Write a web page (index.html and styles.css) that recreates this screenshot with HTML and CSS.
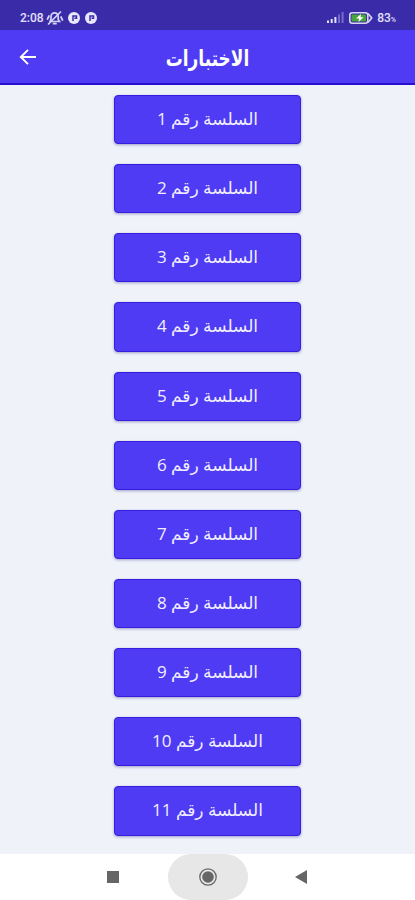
FILE: index.html
```
<!DOCTYPE html>
<html lang="ar">
<head>
    <meta charset="UTF-8">
    <meta name="viewport" content="width=device-width, initial-scale=1.0">
    <title>الاختبارات</title>
    <link rel="stylesheet" href="styles.css">
</head>
<body>

    <div class="status-bar">
        <div class="status-left">
            <span class="time">2:08</span>
            <svg class="mute" viewBox="0 0 18 16" width="18" height="16" fill="none" stroke="#d6d2fa" stroke-width="1.7" stroke-linecap="round">
                <path d="M4 11.5h9.5l-1.3-2V6.5a3.6 3.6 0 0 0-7.2 0v3L4 11.5M7.5 13.7h2.5"/>
                <path d="M2.5 14L14.5 2M1.5 9l1.5-3M15 7l1.500 3"/>
            </svg>
            <svg class="app" viewBox="0 0 12 12" width="12" height="12">
                <circle cx="6" cy="6" r="6" fill="#e9e6ff"/>
                <path d="M5 9V4h3.5v2.2H6.5" fill="none" stroke="#3a2ca9" stroke-width="1.5"/>
            </svg>
            <svg class="app" viewBox="0 0 12 12" width="12" height="12">
                <circle cx="6" cy="6" r="6" fill="#e9e6ff"/>
                <path d="M5 9V4h3.5v2.2H6.5" fill="none" stroke="#3a2ca9" stroke-width="1.5"/>
            </svg>
        </div>
        <div class="status-right">
            <svg viewBox="0 0 17 11" width="17" height="11" fill="#e4e0ff">
                <path d="M0 8.5h2V11H0zM3.7 7h2v4h-2zM7.4 5h2v6h-2z"/>
                <path d="M11 2.5h2V11h-2zM14.6 0h2v11h-2z" fill="#7569ca"/>
            </svg>
            <svg class="battery" viewBox="0 0 24 12" width="24" height="12">
                <rect x=".8" y=".8" width="18" height="10.4" rx="2.5" fill="#3a2ca9" stroke="#d8d5f3" stroke-width="1.6"/>
                <rect x="2.5" y="2.5" width="14.5" height="7" rx="1" fill="#48a43c"/>
                <path d="M19 1.5L22.8 6L19 10.5" fill="none" stroke="#d8d5f3" stroke-width="1.7" stroke-linejoin="round"/>
                <path d="M12 2L7 6.6h3L9.5 10l5-4.7h-3z" fill="#fff"/>
            </svg>
            <span class="level">83<small>%</small></span>
        </div>
    </div>

    <div class="header">
        <svg class="back" viewBox="0 0 18 18" width="18" height="18" fill="none" stroke="#fff" stroke-width="1.9">
            <path d="M17 9H2.5M9 1.8L1.8 9L9 16.2"/>
        </svg>
        <h1>الاختبارات</h1>
    </div>

    <div class="list" dir="rtl">
        <button>السلسة رقم 1</button>
        <button>السلسة رقم 2</button>
        <button>السلسة رقم 3</button>
        <button>السلسة رقم 4</button>
        <button>السلسة رقم 5</button>
        <button>السلسة رقم 6</button>
        <button>السلسة رقم 7</button>
        <button>السلسة رقم 8</button>
        <button>السلسة رقم 9</button>
        <button>السلسة رقم 10</button>
        <button>السلسة رقم 11</button>
    </div>

    <div class="nav-bar">
        <div class="nav-item recents"><svg viewBox="0 0 12 12" width="12" height="12"><path d="M0 0h12v12H0z" fill="#666"/></svg></div>
        <div class="nav-item home">
            <svg viewBox="0 0 18 18" width="18" height="18">
                <circle cx="9" cy="9" r="8.2" fill="none" stroke="#666" stroke-width="1.3"/>
                <circle cx="9" cy="9" r="5.8" fill="#666"/>
            </svg>
        </div>
        <div class="nav-item"><svg viewBox="0 0 12 14" width="12" height="14"><path d="M12 0v14L0 7z" fill="#666"/></svg></div>
    </div>

</body>
</html>
```

FILE: styles.css
```
* {
    box-sizing: border-box;
}
body {
    margin: 0;
    height: 900px;
    display: flex;
    flex-direction: column;
    overflow: hidden;
    background-color: #eff3f9;
    font-family: "Open Sans", "DejaVu Sans", sans-serif;
}
.status-bar {
    height: 30px;
    padding: 5px 19px 0 20px;
    display: flex;
    justify-content: space-between;
    align-items: center;
    background-color: #3a2ca9;
    color: #e4e0ff;
    font-family: Roboto, sans-serif;
    font-size: 12px;
    font-weight: 500;
}
.status-left, .status-right {
    display: flex;
    align-items: center;
}
.mute {
    margin-left: 2px;
}
.app {
    margin-left: 5px;
}
.mute + .app {
    margin-left: 4px;
}
.battery {
    margin: 0 4px 0 5px;
}
.level small {
    font-size: 7px;
}
.header {
    height: 55px;
    display: grid;
    grid-template-columns: 56px 1fr 56px;
    align-items: center;
    background-color: #4e3bf3;
    border-bottom: 2px solid #2b0fd0;
    color: #fff;
}
.back {
    margin-left: 19px;
}
h1 {
    margin: 0;
    text-align: center;
    font-size: 22px;
    line-height: 30px;
    font-weight: bold;
    transform: scaleX(0.77);
}
.list {
    flex: 1;
    padding-top: 10px;
    display: flex;
    flex-direction: column;
    align-items: center;
    gap: 20px;
}
button {
    flex: none;
    width: 187px;
    height: 49.15px;
    padding: 0 0 1px;
    border: 1px solid #371ddd;
    border-radius: 4px;
    background-color: #4e3bf3;
    box-shadow: 0 1px 3px rgba(40, 30, 130, 0.4);
    color: #f1efff;
    font-family: inherit;
    font-size: 17px;
    line-height: 24px;
}
.nav-bar {
    height: 46px;
    display: flex;
    justify-content: center;
    gap: 13px;
    background-color: #fff;
}
.nav-item {
    width: 80px;
    display: flex;
    align-items: center;
    justify-content: center;
}
.recents {
    padding-right: 4px;
}
.home {
    border-radius: 23px;
    background-color: #e7e7e7;
}
```
